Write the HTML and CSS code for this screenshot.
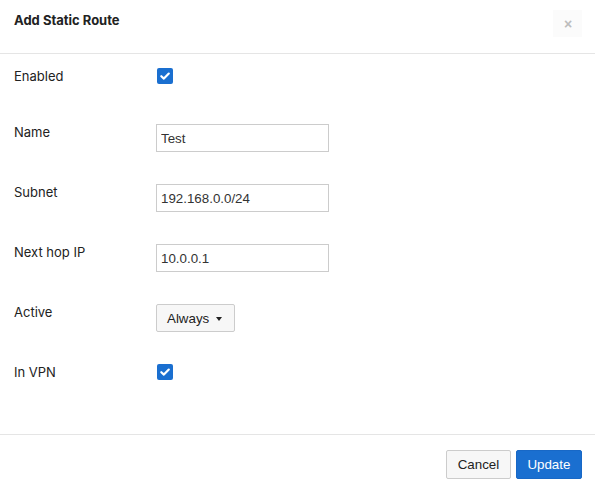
FILE: index.html
```html
<!DOCTYPE html>
<html>
<head>
<meta charset="utf-8">
<link rel="stylesheet" href="styles.css">
</head>
<body>
<div class="modal">
  <div class="modal-header">
    <h4 class="title">Add Static Route</h4>
    <button class="close" type="button">&times;</button>
  </div>
  <div class="modal-body">
    <div class="row row-check">
      <label class="label">Enabled</label>
      <span class="checkbox"><svg viewBox="0 0 16 16" width="16" height="16"><path d="M4.3 8.2 L6.9 10.6 L11.8 5.6" fill="none" stroke="#fff" stroke-width="2.2" stroke-linecap="round" stroke-linejoin="round"/></svg></span>
    </div>
    <div class="row">
      <label class="label">Name</label>
      <input class="input" type="text" value="Test">
    </div>
    <div class="row">
      <label class="label">Subnet</label>
      <input class="input" type="text" value="192.168.0.0/24">
    </div>
    <div class="row">
      <label class="label">Next hop IP</label>
      <input class="input" type="text" value="10.0.0.1">
    </div>
    <div class="row">
      <label class="label">Active</label>
      <button class="dropdown" type="button">Always <span class="caret"></span></button>
    </div>
    <div class="row row-check">
      <label class="label">In VPN</label>
      <span class="checkbox"><svg viewBox="0 0 16 16" width="16" height="16"><path d="M4.3 8.2 L6.9 10.6 L11.8 5.6" fill="none" stroke="#fff" stroke-width="2.2" stroke-linecap="round" stroke-linejoin="round"/></svg></span>
    </div>
  </div>
  <div class="modal-footer">
    <button class="btn btn-default" type="button">Cancel</button>
    <button class="btn btn-primary" type="button">Update</button>
  </div>
</div>
</body>
</html>
```
FILE: styles.css
```css
html, body {
  margin: 0;
  padding: 0;
  background: #fff;
}
body {
  font-family: Inter, "Liberation Sans", sans-serif;
  font-size: 13px;
  color: #222;
}
.modal {
  width: 595px;
  height: 487px;
  display: flex;
  flex-direction: column;
}
.modal-header {
  height: 54px;
  box-sizing: border-box;
  border-bottom: 1px solid #e5e5e5;
  display: flex;
  align-items: flex-start;
  justify-content: space-between;
  padding: 10px 13px 0 14px;
}
.title {
  margin: 0;
  padding-top: 2px;
  font-size: 13px;
  line-height: 16px;
  font-weight: 700;
  color: #222;
}
.close {
  width: 29px;
  height: 27px;
  border: none;
  background: #fbfbfb;
  color: #bdbdbd;
  font-family: "Liberation Sans", sans-serif;
  font-weight: 700;
  font-size: 14px;
  line-height: 1;
  padding: 0 0 0 1px;
  cursor: pointer;
}
.modal-body {
  flex: 1;
  padding: 14px 0 0 14px;
  display: flex;
  flex-direction: column;
  gap: 32px;
}
.row {
  display: flex;
  align-items: flex-start;
  min-height: 24px;
}
.label {
  width: 142px;
  line-height: 16px;
  padding-top: 0;
  color: #222;
}
.checkbox {
  width: 16px;
  height: 16px;
  margin-left: 1px;
  border-radius: 2px;
  background: #1a6fd0;
  display: block;
}
.checkbox svg {
  display: block;
}
.input {
  width: 173px;
  height: 28px;
  box-sizing: border-box;
  border: 1px solid #ccc;
  border-radius: 0;
  padding: 0 4px;
  margin: 0;
  font-family: "Liberation Sans", Arial, sans-serif;
  font-size: 13.33px;
  color: #333;
  background: #fff;
  outline: none;
}
.dropdown {
  height: 28px;
  box-sizing: border-box;
  border: 1px solid #ccc;
  border-radius: 2px;
  background: #f7f7f7;
  padding: 0 12px 0 10px;
  margin: 0;
  font-family: "Liberation Sans", Arial, sans-serif;
  font-size: 13.33px;
  color: #222;
  display: flex;
  align-items: center;
  gap: 7px;
}
.caret {
  width: 0;
  height: 0;
  border-left: 3px solid transparent;
  border-right: 3px solid transparent;
  border-top: 4px solid #222;
  margin-top: 1px;
}
.modal-footer {
  border-top: 1px solid #e5e5e5;
  padding: 15px 13px 8px 0;
  display: flex;
  justify-content: flex-end;
  gap: 5px;
}
.btn {
  height: 29px;
  box-sizing: border-box;
  padding: 0 10.6px;
  border-radius: 2px;
  font-family: "Liberation Sans", Arial, sans-serif;
  font-size: 13.33px;
  cursor: pointer;
}
.btn-default {
  background: #f7f7f7;
  border: 1px solid #ccc;
  color: #222;
}
.btn-primary {
  background: #1a6fd0;
  border: 1px solid #1868c6;
  color: #fff;
}
```
